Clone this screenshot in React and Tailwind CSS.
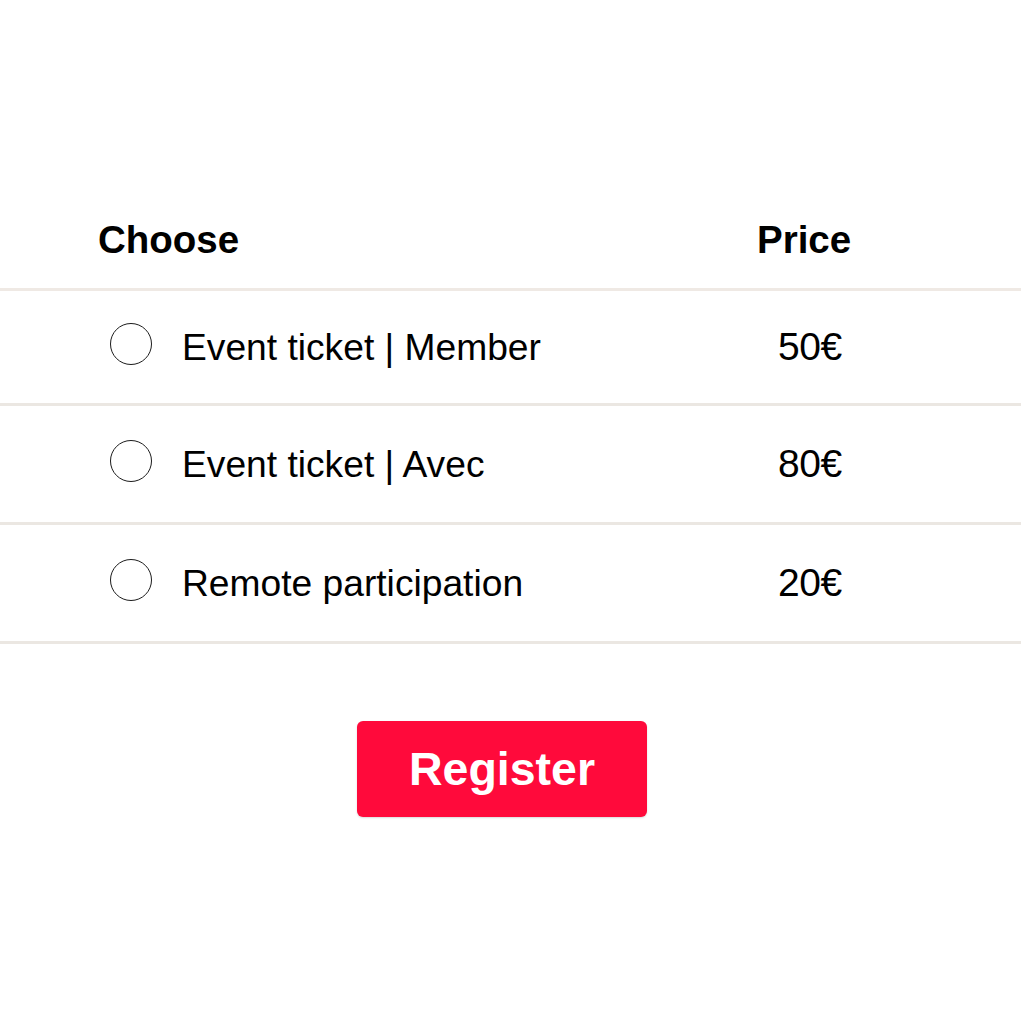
import React, { useState } from 'react';

const OPTIONS = [
    { id: 'member', label: 'Event ticket | Member', price: '50€', h: 'h-[115px]' },
    { id: 'avec', label: 'Event ticket | Avec', price: '80€', h: 'h-[119px]' },
    { id: 'remote', label: 'Remote participation', price: '20€', h: 'h-[119px]' },
];

export default function App() {
    const [selected, setSelected] = useState(null);

    return (
        <div className="min-h-screen bg-white text-black font-['Liberation_Sans',Arial,sans-serif]">
            {/* Header */}
            <div className="grid grid-cols-[659px_1fr] pl-[98px] pt-[218px] pb-[26px] border-b-[3px] border-[#efe9e4]">
                <div className="text-[38.5px] font-bold leading-[44px]">Choose</div>
                <div className="text-[38.5px] font-bold leading-[44px]">Price</div>
            </div>

            {/* Options */}
            {OPTIONS.map(opt => (
                <label
                    key={opt.id}
                    className={`flex items-center pl-[110px] ${opt.h} border-b-[3px] border-[#ebe7e2] cursor-pointer`}
                >
                    <span
                        className="w-[42px] h-[42px] rounded-full border-[1.5px] border-[#1c1c1c] flex items-center justify-center -translate-y-[3px] shrink-0"
                        onClick={() => setSelected(opt.id)}
                    >
                        {selected === opt.id && <span className="w-[24px] h-[24px] rounded-full bg-[#222]" />}
                    </span>
                    <span className="ml-[30px] w-[596px] text-[37.2px] leading-[44px]">{opt.label}</span>
                    <span className="text-[39px] leading-[44px] tracking-[-0.5px]">{opt.price}</span>
                </label>
            ))}

            {/* Action */}
            <div className="flex justify-center pr-[17px] pt-[77px]">
                <button className="w-[290px] h-[96px] rounded-[6px] bg-[#ff0a3b] text-white text-[46.5px] font-bold leading-none shadow-[0_1px_2px_rgba(0,0,0,0.15)]">
                    Register
                </button>
            </div>
        </div>
    );
}
